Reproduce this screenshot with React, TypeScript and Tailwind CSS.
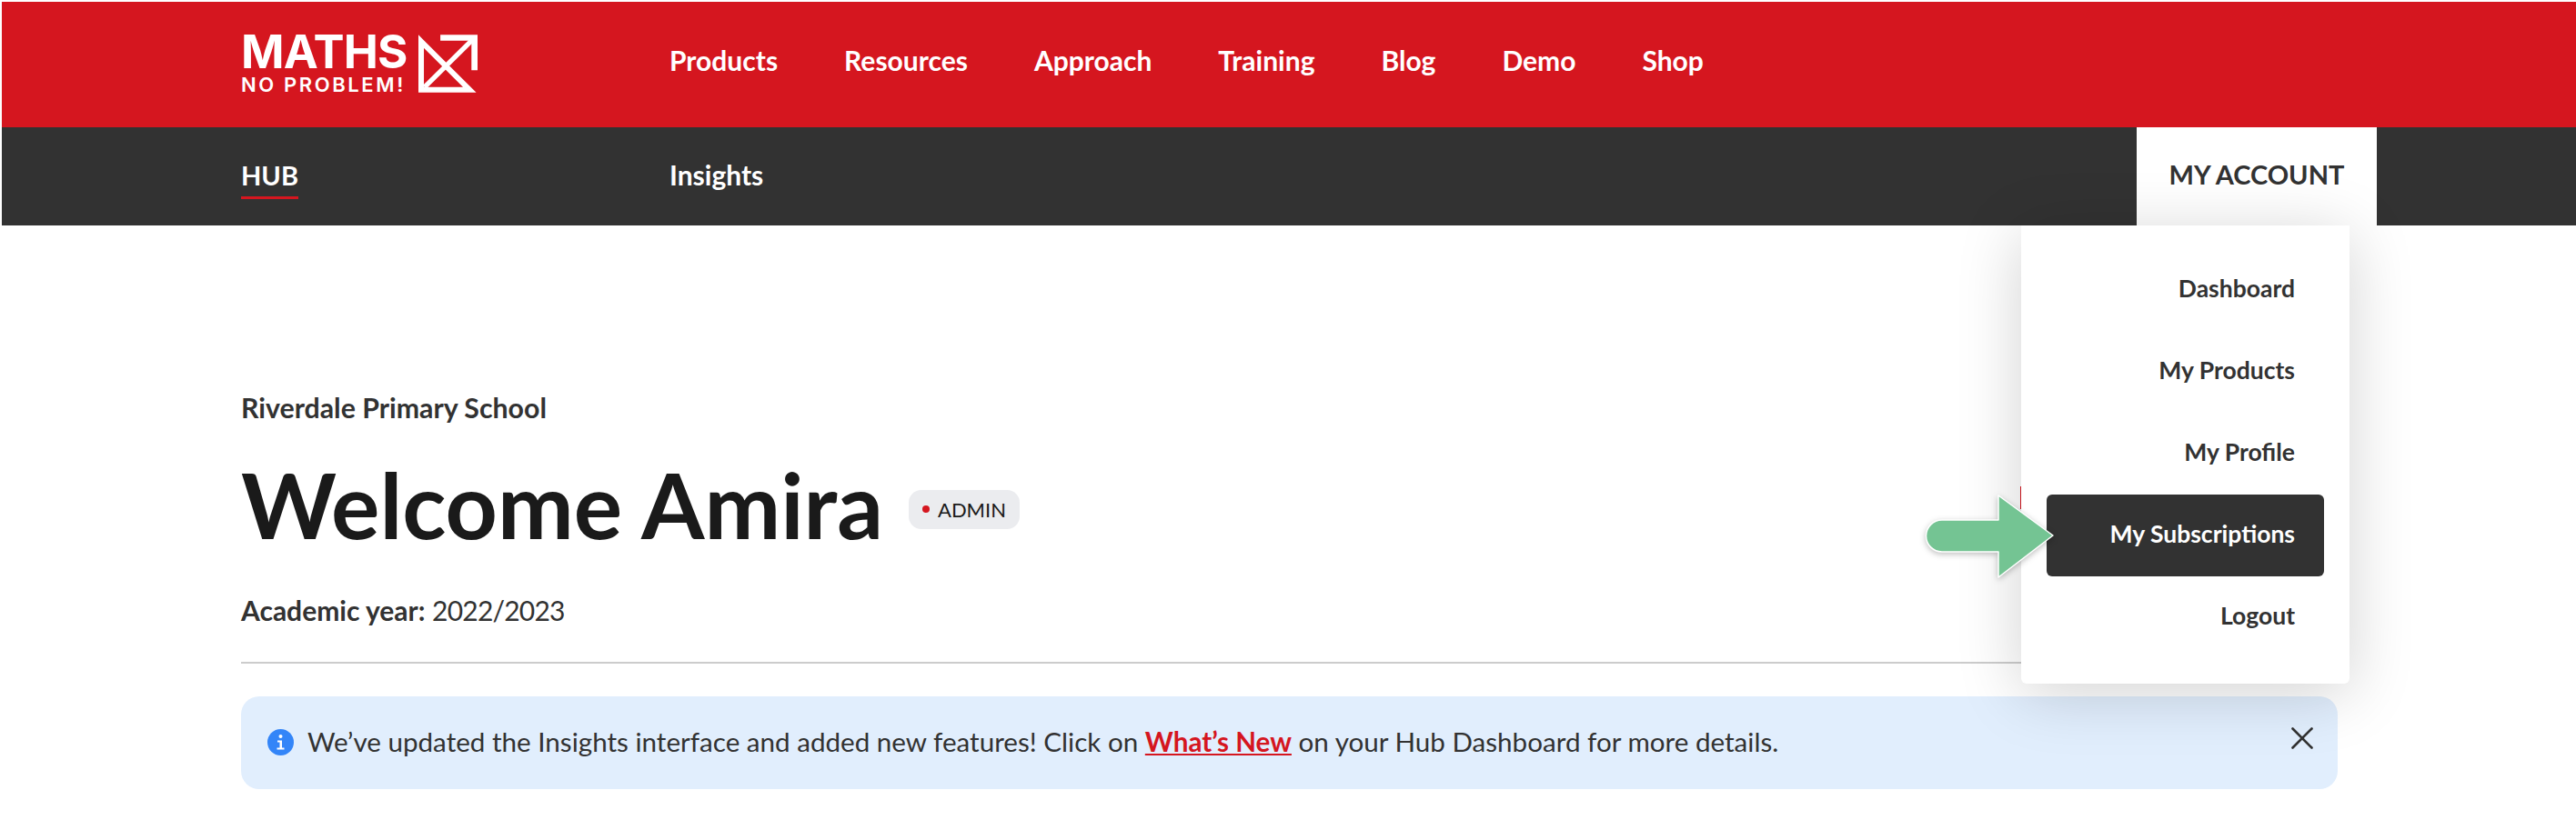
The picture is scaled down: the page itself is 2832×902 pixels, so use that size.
import React from 'react';
import { X } from 'lucide-react';

const navItems = ['Products', 'Resources', 'Approach', 'Training', 'Blog', 'Demo', 'Shop'];
const accountItems = ['Dashboard', 'My Products', 'My Profile', 'My Subscriptions', 'Logout'];

const LogoMark: React.FC = () => (
  <svg width="65" height="64" viewBox="0 0 194 190" fill="none" stroke="white" className="shrink-0">
    <path d="M9 22 L168 181 L9 181 Z" strokeWidth="18" />
    <path d="M72 10 L184 10 L184 117" strokeWidth="20" />
    <path d="M20 172 L176 18" strokeWidth="16" />
  </svg>
);

const Logo: React.FC = () => (
  <div className="flex items-center gap-[15px]">
    <div className="flex flex-col w-[180px] font-['Inter',sans-serif] text-white">
      <span className="text-[51px] leading-[38px] h-[38px] font-bold tracking-[-0.8px]">MATHS</span>
      <span className="mt-[9px] text-[22px] leading-[17px] font-semibold tracking-[2.6px] whitespace-nowrap">NO PROBLEM!</span>
    </div>
    <LogoMark />
  </div>
);

const Arrow: React.FC = () => (
  <svg
    width="148"
    height="100"
    viewBox="0 0 148 100"
    className="absolute left-[2114px] top-[540px] drop-shadow-[0_2px_3px_rgba(0,0,0,0.25)]"
  >
    <path
      d="M21 32 H83 V5 L143 49 L83 95 V67 H21 A17.5 17.5 0 0 1 21 32 Z"
      fill="#74c493"
      stroke="white"
      strokeWidth="1.5"
      strokeLinejoin="round"
    />
  </svg>
);

export default function App() {
  return (
    <div className="relative w-[2832px] h-[902px] overflow-hidden bg-white pl-[2px] pt-[2px] font-['Lato',sans-serif] text-[#323232]">
      <header className="flex items-center h-[138px] bg-[#d5161f] pl-[263px]">
        <div className="w-[471px] pb-[2px]">
          <Logo />
        </div>
        <nav className="flex gap-[73px] pb-[9px] text-[30px] font-bold text-white">
          {navItems.map(item => (
            <span key={item}>{item}</span>
          ))}
        </nav>
      </header>

      <div className="flex items-center h-[108px] bg-[#323232] pl-[263px] pr-[219px] text-[30px] text-white">
        <div className="w-[471px] mb-[4px]">
          <span className="relative inline-block text-[29px] font-bold">
            HUB
            <span className="absolute left-0 right-0 top-[45px] h-[3px] bg-[#d5161f]" />
          </span>
        </div>
        <span className="font-bold mb-[4px]">Insights</span>
        <div className="ml-auto flex items-center justify-center w-[264px] h-full pb-[4px] bg-white text-[29px] font-bold text-[#323232]">
          MY ACCOUNT
        </div>
      </div>

      <main className="pl-[263px] pr-[262px] pt-[181px]">
        <p className="text-[30.3px] leading-[38px] font-bold">Riverdale Primary School</p>
        <div className="flex items-center mt-[32px]">
          <h1 className="text-[100px] leading-[110px] font-bold text-[#1a1a1a]">Welcome Amira</h1>
          <span className="flex items-center gap-[9px] h-[43px] ml-[28px] mt-[12px] px-[15px] rounded-[14px] bg-[#ebecef] text-[22px] text-[#1a1a1a]">
            <span className="w-[8px] h-[8px] rounded-full bg-[#d5161f]" />
            ADMIN
          </span>
        </div>
        <p className="mt-[43px] text-[30px] leading-[38px]">
          <span className="font-bold">Academic year:</span> <span className="tracking-[-0.8px]">2022/2023</span>
        </p>
        <div className="mt-[38px] h-[2px] bg-[#cccccc]" />
        <div className="flex items-center h-[102px] mt-[36px] pl-[29px] pr-[18px] pb-[2px] rounded-[20px] bg-[#e1eefd] text-[29.6px]">
          <svg width="29" height="29" viewBox="0 0 29 29" className="shrink-0 mr-[15px]">
            <circle cx="14.5" cy="14.5" r="14.5" fill="#3385f8" />
            <circle cx="14.5" cy="8" r="2" fill="white" />
            <path d="M11 12.5 H16 V20.5 H18.5 V22.5 H10.5 V20.5 H13.5 V14.5 H11 Z" fill="white" />
          </svg>
          <span>
            We’ve updated the Insights interface and added new features! Click on{' '}
            <span className="font-bold text-[#d5161f] underline">What’s New</span> on your Hub Dashboard for more details.
          </span>
          <X className="ml-auto mb-[8px] text-[#323232]" size={42} strokeWidth={1.5} />
        </div>
      </main>

      <div className="absolute left-[2221px] top-[535px] w-px h-[25px] bg-[#d5161f]" />
      <div className="absolute left-[2222px] top-[248px] w-[361px] h-[504px] pt-[26px] px-[28px] rounded-b-[6px] bg-white shadow-[0_10px_70px_rgba(0,0,0,0.18)]">
        {accountItems.map(item => (
          <div
            key={item}
            className={`flex items-center justify-end h-[90px] pr-[32px] pb-[2px] rounded-[6px] text-[26.5px] font-bold ${
              item === 'My Subscriptions' ? 'bg-[#323232] text-white' : ''
            }`}
          >
            {item}
          </div>
        ))}
      </div>
      <Arrow />
    </div>
  );
}
